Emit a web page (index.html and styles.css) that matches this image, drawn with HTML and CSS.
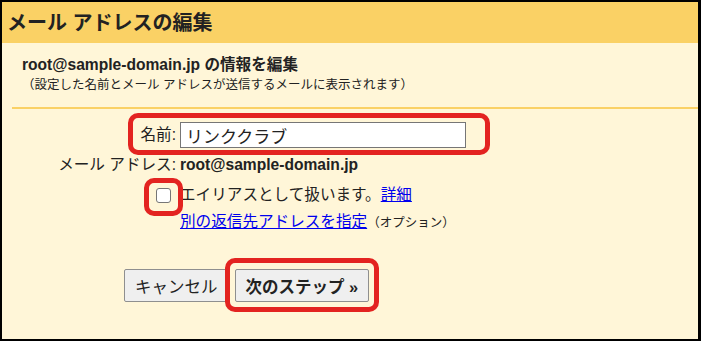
FILE: index.html
```html
<!DOCTYPE html>
<html lang="ja">
<head>
    <meta charset="UTF-8">
    <meta name="viewport" content="width=device-width, initial-scale=1.0">
    <title>メール アドレスの編集</title>
    <link rel="stylesheet" href="styles.css">
</head>
<body>
    <div class="frame">
        <div class="head">
            <h1>メール アドレスの編集</h1>
        </div>

        <div class="intro">
            <div class="intro-title">root@sample-domain.jp の情報を編集</div>
            <div class="intro-note">（設定した名前とメール アドレスが送信するメールに表示されます）</div>
        </div>
        <div class="rule"></div>

        <form class="edit-form" onsubmit="return false">
            <div class="row row-name">
                <label class="label" for="name">名前:</label>
                <div class="value">
                    <span class="input-wrap">
                        <input type="text" id="name" class="text-input" value="リンククラブ">
                        <span class="mark mark-name"></span>
                    </span>
                </div>
            </div>

            <div class="row row-mail">
                <span class="label">メール アドレス:</span>
                <div class="value"><strong>root@sample-domain.jp</strong></div>
            </div>

            <div class="row row-alias">
                <div class="label">
                    <span class="check-wrap">
                        <input type="checkbox" id="alias" class="check">
                        <span class="mark mark-check"></span>
                    </span>
                </div>
                <div class="value">
                    <label for="alias">エイリアスとして扱います。</label><a href="#">詳細</a>
                </div>
            </div>

            <div class="row row-reply">
                <span class="label"></span>
                <div class="value">
                    <a href="#">別の返信先アドレスを指定</a><span class="small">（オプション）</span>
                </div>
            </div>

            <div class="buttons">
                <button type="button" class="btn">キャンセル</button>
                <span class="next-wrap">
                    <button type="submit" class="btn btn-next">次のステップ »</button>
                    <span class="mark mark-next"></span>
                </span>
            </div>
        </form>
    </div>
</body>
</html>
```

FILE: styles.css
```css
* {
    box-sizing: border-box;
}
body {
    margin: 0;
    background: #000;
}
.frame {
    width: 701px;
    height: 341px;
    border-style: solid;
    border-color: #000;
    border-width: 2px 3px 2px 2px;
    background: #fff6d8;
    font-family: "Liberation Sans", "Noto Sans CJK JP", sans-serif;
    font-size: 15.6px;
    color: #222;
    overflow: hidden;
}
.head {
    height: 41px;
    background: #fad165;
    padding-left: 5px;
    display: flex;
    align-items: center;
}
.head h1 {
    margin: 0;
    font-size: 20px;
    line-height: 24px;
    font-weight: bold;
    color: #222;
}
.intro {
    padding: 12px 0 0 20px;
    height: 64px;
}
.intro-title {
    font-weight: bold;
    line-height: 20px;
}
.intro-note {
    font-size: 12.5px;
    line-height: 18px;
    margin-top: 1px;
}
.rule {
    height: 2px;
    margin-left: 10px;
    background: #fad165;
}
.edit-form {
    margin: 0;
}
.row {
    display: grid;
    grid-template-columns: 174px 1fr;
    column-gap: 4px;
    align-items: center;
    height: 20px;
    line-height: 20px;
}
.label {
    text-align: right;
    white-space: nowrap;
}
.value {
    white-space: nowrap;
}
.row-name {
    margin-top: 13px;
    height: 26px;
}
.row-mail {
    margin-top: 7px;
}
.row-alias {
    margin-top: 10px;
}
.row-reply {
    margin-top: 7px;
}
.input-wrap {
    position: relative;
    display: block;
    width: 286px;
}
.text-input {
    display: block;
    width: 286px;
    height: 26px;
    padding: 0 5px;
    border: 1px solid #767676;
    border-radius: 0;
    background: #fff;
    font-family: "Liberation Sans", "Noto Sans CJK JP", sans-serif;
    font-size: 17px;
    color: #222;
}
.check-wrap {
    position: relative;
    display: inline-block;
    width: 15px;
    height: 15px;
    margin-right: 5px;
    vertical-align: middle;
}
.check {
    display: block;
    width: 15px;
    height: 15px;
    margin: 0;
    appearance: none;
    background: #fff;
    border: 1px solid #767676;
    border-radius: 3px;
}
a {
    color: #0000ee;
    text-decoration: underline;
}
.small {
    font-size: 12.5px;
}
.buttons {
    display: flex;
    gap: 6px;
    margin-top: 37px;
    padding-left: 122px;
}
.btn {
    height: 33px;
    padding: 0 10px;
    border: 1px solid #8f8f8f;
    border-radius: 2px;
    background: #efefef;
    font-family: "Liberation Sans", "Noto Sans CJK JP", sans-serif;
    font-size: 16.5px;
    color: #222;
}
.next-wrap {
    position: relative;
    display: block;
}
.btn-next {
    display: block;
    font-weight: bold;
}
.mark {
    position: absolute;
    border: 5px solid #e32320;
    border-radius: 10px;
    pointer-events: none;
}
.mark-name {
    left: -52px;
    right: -24px;
    top: -9px;
    bottom: -7px;
}
.mark-check {
    left: -12px;
    right: -12px;
    top: -10px;
    bottom: -13px;
}
.mark-next {
    left: -10px;
    right: -10px;
    top: -11px;
    bottom: -10px;
}
```
